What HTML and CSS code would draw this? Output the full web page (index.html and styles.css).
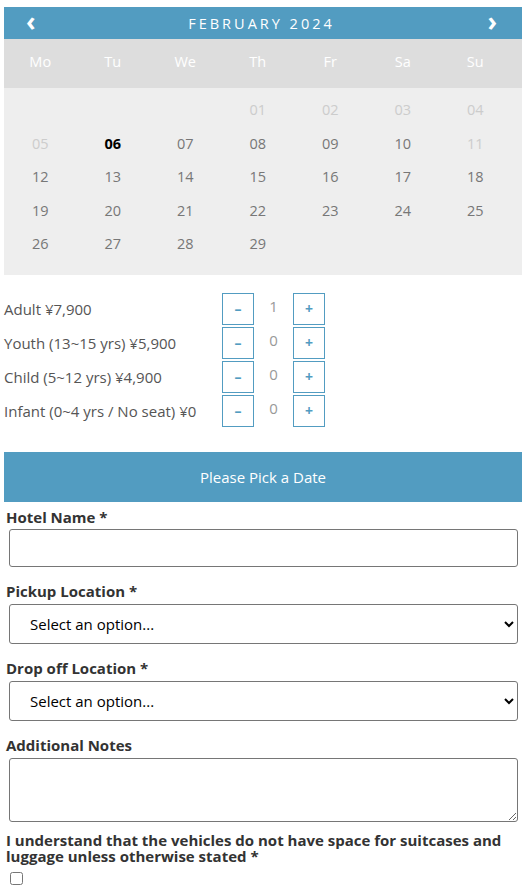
FILE: index.html
```html
<!DOCTYPE html>
<html>
<head>
<meta charset="utf-8">
<link rel="stylesheet" href="styles.css">
</head>
<body>
<div class="cal">
  <div class="cal-head">
    <span class="nav">&#8249;</span>
    <span class="month">FEBRUARY 2024</span>
    <span class="nav">&#8250;</span>
  </div>
  <div class="week">
    <span>Mo</span><span>Tu</span><span>We</span><span>Th</span><span>Fr</span><span>Sa</span><span>Su</span>
  </div>
  <div class="days">
    <span></span><span></span><span></span>
    <span class="off">01</span><span class="off">02</span><span class="off">03</span><span class="off">04</span>
    <span class="off">05</span><span class="today">06</span><span>07</span><span>08</span><span>09</span><span>10</span><span class="off">11</span>
    <span>12</span><span>13</span><span>14</span><span>15</span><span>16</span><span>17</span><span>18</span>
    <span>19</span><span>20</span><span>21</span><span>22</span><span>23</span><span>24</span><span>25</span>
    <span>26</span><span>27</span><span>28</span><span>29</span>
  </div>
</div>

<div class="counters">
  <div class="crow"><span class="clabel">Adult ¥7,900</span><span class="btn">&#8211;</span><span class="cval">1</span><span class="btn">+</span></div>
  <div class="crow"><span class="clabel">Youth (13~15 yrs) ¥5,900</span><span class="btn">&#8211;</span><span class="cval">0</span><span class="btn">+</span></div>
  <div class="crow"><span class="clabel">Child (5~12 yrs) ¥4,900</span><span class="btn">&#8211;</span><span class="cval">0</span><span class="btn">+</span></div>
  <div class="crow"><span class="clabel">Infant (0~4 yrs / No seat) ¥0</span><span class="btn">&#8211;</span><span class="cval">0</span><span class="btn">+</span></div>
</div>

<div class="pick">Please Pick a Date</div>

<form class="form">
  <label class="lbl">Hotel Name *</label>
  <input class="field" type="text">
  <label class="lbl">Pickup Location *</label>
  <select class="field sel"><option>Select an option...</option></select>
  <label class="lbl">Drop off Location *</label>
  <select class="field sel"><option>Select an option...</option></select>
  <label class="lbl">Additional Notes</label>
  <textarea class="field notes"></textarea>
  <label class="lbl long">I understand that the vehicles do not have space for suitcases and luggage unless otherwise stated *</label>
  <input class="chk" type="checkbox">
</form>
</body>
</html>
```
FILE: styles.css
```css
html, body { margin: 0; padding: 0; }
body {
  padding: 7px 3px 0 4px;
  font-family: "Open Sans", "Noto Sans", sans-serif;
  font-size: 15px;
  color: #555;
  background: #fff;
}
.cal-head {
  background: #529cc1;
  height: 32px;
  display: flex;
  align-items: center;
  justify-content: space-between;
  padding: 0 25px 0 22px;
  color: #fff;
}
.nav { font-size: 26px; font-weight: 700; line-height: 1; margin-top: -4px; }
.month { letter-spacing: 3px; font-size: 14.5px; }
.week {
  background: #dddddd;
  height: 49px;
  box-sizing: border-box;
  padding-bottom: 4px;
  display: grid;
  grid-template-columns: repeat(7, 72.5px);
  align-items: center;
  color: #fff;
  font-size: 14.5px;
}
.week span, .days span { text-align: center; }
.days {
  background: #eeeeee;
  display: grid;
  grid-template-columns: repeat(7, 72.5px);
  grid-auto-rows: 33.5px;
  align-items: center;
  padding: 5px 0 14px;
  color: #777;
  font-size: 14.5px;
}
.days .off { color: #cccccc; }
.days .today { color: #000; font-weight: 700; }
.counters {
  padding-top: 18px;
  display: flex;
  flex-direction: column;
  gap: 2px;
}
.crow { display: flex; align-items: center; height: 32px; }
.clabel { width: 218px; font-size: 15px; }
.btn {
  width: 30px; height: 30px;
  border: 1px solid #529cc1;
  color: #529cc1;
  display: flex; align-items: center; justify-content: center;
  font-weight: 700; font-size: 14px;
}
.cval { width: 39px; text-align: center; color: #999; font-size: 15px; margin-top: -5px; }
.pick {
  margin-top: 25px;
  background: #529cc1;
  color: #fff;
  height: 50px;
  display: flex; align-items: center; justify-content: center;
  font-size: 15px;
}
.form { display: flex; flex-direction: column; padding: 5px 0 0 2px; }
.lbl { font-weight: 700; color: #333; font-size: 15px; line-height: 20px; }
.field {
  margin: 2px 4px 0 3px;
  box-sizing: border-box;
  border: 1px solid #767676;
  border-radius: 3px;
  background: #fff;
  font-family: inherit;
}
input.field { height: 38px; margin-bottom: 14px; }
.sel { height: 40px; margin-top: 3px; padding-left: 16px; font-size: 15px; color: #000; margin-bottom: 14px; }
.notes { height: 64px; margin-top: 3px; margin-bottom: 10px; resize: vertical; }
.long { line-height: 16px; }
.chk { margin: 8px 0 0 4px; width: 13px; height: 13px; }
```
